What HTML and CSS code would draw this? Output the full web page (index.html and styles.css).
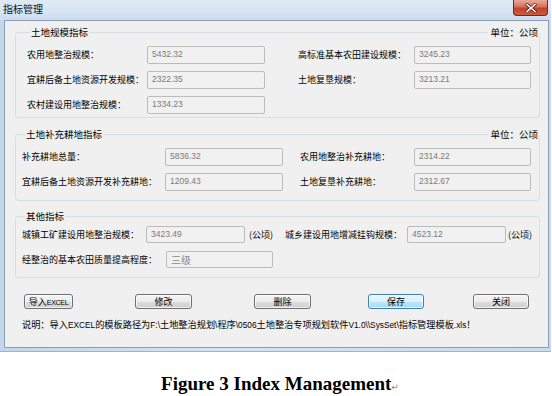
FILE: index.html
```html
<!DOCTYPE html>
<html lang="zh-CN">
<head>
<meta charset="utf-8">
<title>指标管理</title>
<link rel="stylesheet" href="styles.css">
</head>
<body>
<div class="window">
  <div class="titlebar">
    <span class="title">指标管理</span>
    <span class="close">
      <svg width="14" height="10" viewBox="0 0 14 10"><path d="M3 1.5 L11 8.5 M11 1.5 L3 8.5" stroke="#5a1a10" stroke-width="3" stroke-linecap="square"/><path d="M3 1.5 L11 8.5 M11 1.5 L3 8.5" stroke="#ffffff" stroke-width="1.6" stroke-linecap="square"/></svg>
    </span>
  </div>
  <div class="client">
    <fieldset class="group g1">
      <legend class="ghead"><span class="gstub"></span><span class="gtitle">土地规模指标</span><span class="gline"></span><span class="unit">单位：公顷</span></legend>
      <div class="row">
        <span class="lab">农用地整治规模：</span><span class="field fl">5432.32</span>
        <span class="lab r">高标准基本农田建设规模：</span><span class="field fr">3245.23</span>
      </div>
      <div class="row">
        <span class="lab">宜耕后备土地资源开发规模：</span><span class="field fl">2322.35</span>
        <span class="lab r">土地复垦规模：</span><span class="field fr">3213.21</span>
      </div>
      <div class="row">
        <span class="lab">农村建设用地整治规模：</span><span class="field fl">1334.23</span>
      </div>
    </fieldset>

    <fieldset class="group g2">
      <legend class="ghead"><span class="gstub"></span><span class="gtitle">土地补充耕地指标</span><span class="gline"></span><span class="unit">单位：公顷</span></legend>
      <div class="row">
        <span class="lab">补充耕地总量：</span><span class="field fl">5836.32</span>
        <span class="lab r">农用地整治补充耕地：</span><span class="field fr">2314.22</span>
      </div>
      <div class="row">
        <span class="lab">宜耕后备土地资源开发补充耕地：</span><span class="field fl">1209.43</span>
        <span class="lab r">土地复垦补充耕地：</span><span class="field fr">2312.67</span>
      </div>
    </fieldset>

    <fieldset class="group g3">
      <legend class="ghead"><span class="gstub"></span><span class="gtitle">其他指标</span><span class="gline"></span></legend>
      <div class="row">
        <span class="lab">城镇工矿建设用地整治规模：</span><span class="field fl">3423.49</span><span class="suffix">(公顷)</span>
        <span class="lab r">城乡建设用地增减挂钩规模：</span><span class="field fr">4523.12</span><span class="suffix sr">(公顷)</span>
      </div>
      <div class="row">
        <span class="lab l2">经整治的基本农田质量提高程度：</span><span class="field f2 big">三级</span>
      </div>
    </fieldset>

    <div class="buttons">
      <span class="btn b1">导入<span class="lat">EXCEL</span></span>
      <span class="btn b2">修改</span>
      <span class="btn b3">删除</span>
      <span class="btn b4 default">保存</span>
      <span class="btn b5">关闭</span>
    </div>
    <p class="note">说明：导入<span class="lat">EXCEL</span>的模板路径为<span class="lat">F:\</span>土地整治规划<span class="lat">\</span>程序<span class="lat">\0506</span>土地整治专项规划软件<span class="lat">V1.0\\SysSet\</span>指标管理模板<span class="lat">.xls</span>！</p>
  </div>
</div>
<p class="caption">Figure 3 Index Management<span class="ret">↵</span></p>
</body>
</html>
```

FILE: styles.css
```css
* { box-sizing: border-box; }
html, body { margin: 0; padding: 0; background: #ffffff; }
body {
  width: 552px;
  height: 396px;
  overflow: hidden;
  font-family: "Noto Sans CJK SC", "Liberation Sans", sans-serif;
  color: #000;
}
.window {
  width: 551px;
  height: 352px;
  padding: 0 2px 3px 4px;
  background: linear-gradient(90deg, #c3d6ec 0%, #d5e4f4 40%, #c9dbef 100%);
  border-bottom: 1px solid #9fb3c9;
  display: flex;
  flex-direction: column;
}
.titlebar {
  height: 20px;
  flex: none;
  display: flex;
  justify-content: space-between;
  align-items: flex-start;
  margin-left: -4px;
  margin-right: -2px;
  background: linear-gradient(180deg, #dfeaf6 0%, #d6e4f3 60%, #cbdcef 100%);
}
.title {
  font-size: 10px;
  line-height: 18px;
  padding-left: 3px;
  color: #111;
}
.close {
  width: 35px;
  height: 16px;
  margin-right: 3px;
  border: 1px solid #6e2a20;
  border-top: none;
  border-radius: 0 0 4px 4px;
  background: linear-gradient(180deg, #e9a999 0%, #d7705b 45%, #c2412a 55%, #cf5c3e 100%);
  display: flex;
  align-items: center;
  justify-content: center;
}
.client {
  flex: 1;
  background: #f0f0f0;
  border: 1px solid #8a9db3;
  padding: 6px 8px 0 10px;
  display: flex;
  flex-direction: column;
}
.group {
  margin: 0;
  padding: 0;
  border: 1px solid #d5dfe5;
  border-radius: 3px;
  min-inline-size: 0;
}
.ghead {
  width: 100%;
  padding: 0;
  margin: 0;
  display: flex;
  align-items: center;
  height: 10px;
  font-size: 9.5px;
  line-height: 10px;
}
.gstub { width: 3px; height: 1px; background: #d5dfe5; flex: none; }
.gtitle { padding: 0 2px 0 1px; flex: none; }
.gline { flex: 1; height: 1px; background: #d5dfe5; }
.unit { padding-left: 2px; padding-right: 1px; flex: none; }

.row {
  display: flex;
  align-items: center;
  height: 18px;
  font-size: 9px;
  line-height: 18px;
  white-space: nowrap;
}
.lab { flex: none; }
.field {
  flex: none;
  height: 18px;
  border: 1px solid #bcbcbc;
  border-radius: 2px;
  background: #f1f1f1;
  color: #7a7a7a;
  font-family: "Liberation Sans", sans-serif;
  font-size: 8.5px;
  line-height: 12px;
  padding: 1px 4px 0;
}
.field.big {
  font-family: "Noto Sans CJK SC", sans-serif;
  font-size: 10px;
  line-height: 14px;
  color: #8a8a8a;
}

.g1 { padding: 9px 0 3px 11px; }
.g1 .row + .row { margin-top: 7px; }
.g1 .lab { width: 120px; }
.g1 .fl { width: 118px; }
.g1 .lab.r { margin-left: 33px; width: 116px; }
.g1 .fr { width: 117px; }

.g2 { margin-top: 11px; padding: 9px 0 9px 6px; }
.g2 .row + .row { margin-top: 7px; }
.g2 .lab { width: 143px; }
.g2 .fl { width: 118px; }
.g2 .lab.r { margin-left: 17px; width: 114px; }
.g2 .fr { width: 117px; }

.g3 { margin-top: 10px; padding: 5px 0 9px 6px; }
.g3 .row { height: 17px; }
.g3 .field { height: 17px; }
.g3 .row + .row { margin-top: 8px; }
.g3 .lab { width: 124px; }
.g3 .fl { width: 99px; }
.g3 .suffix { margin-left: 4px; width: 26px; font-size: 9px; }
.g3 .lab.r { margin-left: 10px; width: 122px; }
.g3 .fr { width: 99px; }
.g3 .suffix.sr { margin-left: 2px; }
.g3 .lab.l2 { width: 144px; }
.g3 .f2 { width: 107px; }

.buttons {
  display: flex;
  margin-top: 16px;
  padding-left: 9px;
}
.btn {
  height: 15px;
  border: 1px solid #707070;
  border-radius: 3px;
  background: linear-gradient(180deg, #f4f4f4 0%, #ebebeb 50%, #dddddd 51%, #cfcfcf 100%);
  font-size: 9px;
  line-height: 13px;
  text-align: center;
  color: #000;
  box-shadow: inset 0 0 0 1px rgba(255,255,255,0.7);
}
.btn .lat { font-size: 7px; letter-spacing: -0.3px; }
.btn.default {
  border-color: #3c7fb1;
  background: linear-gradient(180deg, #eaf6fd 0%, #d9f0fc 50%, #bee6fd 51%, #a7d9f5 100%);
}
.b1 { width: 49px; }
.b2 { width: 57px; margin-left: 62px; }
.b3 { width: 57px; margin-left: 62px; }
.b4 { width: 56px; margin-left: 57px; }
.b5 { width: 56px; margin-left: 49px; }

.lat {
  font-family: "Liberation Sans", sans-serif;
  font-size: 8.3px;
}
.note {
  margin: 9px 0 0 7px;
  font-size: 9.2px;
  line-height: 12px;
  white-space: nowrap;
}
.caption {
  margin: 21px 0 0;
  padding-left: 8px;
  text-align: center;
  font-family: "Liberation Serif", serif;
  font-weight: bold;
  font-size: 19px;
  line-height: 22px;
  color: #000;
}
.ret {
  font-family: "DejaVu Sans", sans-serif;
  font-weight: normal;
  font-size: 9px;
  color: #888;
}
```
